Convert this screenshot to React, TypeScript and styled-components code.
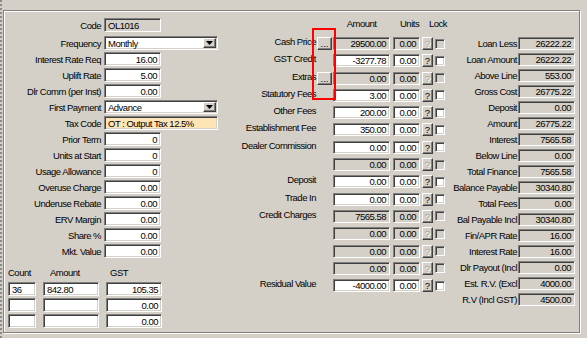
import React from 'react';
import styled, { createGlobalStyle } from 'styled-components';

const GlobalStyle = createGlobalStyle`
  html, body {
    margin: 0;
    padding: 0;
    background: #d4d0c8;
  }
  body {
    font-family: "Liberation Sans", Arial, sans-serif;
    font-size: 9.5px;
    letter-spacing: -0.5px;
    color: #000;
  }
`;

const Screen = styled.div`
  box-sizing: border-box;
  width: 587px;
  height: 338px;
  overflow: hidden;
  border-left: 2px dotted #8a8a8a;
  padding: 10px 0 0 1px;
`;

const Panel = styled.div`
  box-sizing: border-box;
  width: 577px;
  height: 323px;
  border: 1px solid #808080;
  box-shadow: inset 1px 1px #fff, 1px 1px #fff;
  display: flex;
  align-items: flex-start;
`;

// ---- shared win32-ish controls

const Field = styled.div<{ $w: number; $grey?: boolean; $left?: boolean; $bg?: string }>`
  box-sizing: border-box;
  flex: none;
  width: ${p => p.$w}px;
  height: 100%;
  border: 1px solid;
  border-color: #808080 #fff #fff #808080;
  box-shadow: inset 1px 1px #404040, inset -1px -1px #d4d0c8;
  background: ${p => p.$bg || (p.$grey ? '#d4d0c8' : '#fff')};
  padding: 0 3px;
  display: flex;
  align-items: center;
  justify-content: ${p => (p.$left ? 'flex-start' : 'flex-end')};
  white-space: nowrap;
  overflow: hidden;
`;

const SelectBox = styled(Field)`
  justify-content: space-between;
  padding: 0 1px 0 3px;
`;

const DropBtn = styled.div`
  box-sizing: border-box;
  width: 13px;
  height: 10px;
  background: #d4d0c8;
  border: 1px solid;
  border-color: #fff #404040 #404040 #fff;
  box-shadow: inset -1px -1px #808080;
  display: flex;
  align-items: center;
  justify-content: center;
`;

const RaisedBtn = styled.div<{ $w: number; $off?: boolean }>`
  box-sizing: border-box;
  flex: none;
  width: ${p => p.$w}px;
  height: 100%;
  background: #d4d0c8;
  border: 1px solid;
  border-color: #fff #404040 #404040 #fff;
  box-shadow: inset -1px -1px #808080;
  display: flex;
  align-items: center;
  justify-content: center;
  letter-spacing: 0;
  color: ${p => (p.$off ? '#a0a0a0' : '#000')};
  text-shadow: ${p => (p.$off ? '1px 1px #fff' : 'none')};
`;

const Check = styled.div<{ $off?: boolean }>`
  box-sizing: border-box;
  flex: none;
  width: 10px;
  height: 10px;
  margin-left: 2px;
  border: 1px solid;
  border-color: #808080 #fff #fff #808080;
  box-shadow: inset 1px 1px #404040, inset -1px -1px #d4d0c8;
  background: ${p => (p.$off ? '#d4d0c8' : '#fff')};
`;

// ---- left column

const LeftCol = styled.div`
  box-sizing: border-box;
  width: 216px;
  flex: none;
  padding-top: 7px;
`;

const LeftRows = styled.div`
  display: flex;
  flex-direction: column;
  gap: 2px;
`;

const LeftRow = styled.div<{ $extra?: number }>`
  display: flex;
  align-items: center;
  height: 14px;
  margin-bottom: ${p => p.$extra || 0}px;
`;

const LeftLabel = styled.div`
  width: 97px;
  margin-right: 3px;
  text-align: right;
  white-space: nowrap;
`;

const Totals = styled.div`
  display: grid;
  grid-template-columns: 28px 56px 56px;
  grid-auto-rows: 14px;
  column-gap: 7px;
  row-gap: 2px;
  margin: 8px 0 0 4px;
`;

const TotalsHead = styled.div<{ $pad?: number }>`
  height: 15px;
  line-height: 14px;
  padding-left: ${p => p.$pad || 0}px;
`;

// ---- middle column

const MidCol = styled.div`
  position: relative;
  box-sizing: border-box;
  width: 225px;
  flex: none;
  padding-top: 6px;
`;

const MidHead = styled.div`
  display: flex;
  height: 13px;
  align-items: center;
  margin-bottom: 7px;
`;

const HeadCell = styled.div<{ $w: number; $pad?: number; $center?: boolean }>`
  flex: none;
  width: ${p => p.$w}px;
  padding-left: ${p => p.$pad || 0}px;
  box-sizing: border-box;
  text-align: ${p => (p.$center ? 'center' : 'left')};
  white-space: nowrap;
`;

const MidRows = styled.div`
  display: flex;
  flex-direction: column;
  gap: 4.3px;
`;

const MidRow = styled.div`
  display: flex;
  align-items: center;
  height: 13px;
`;

const MidLabel = styled.div`
  box-sizing: border-box;
  width: 96px;
  padding-bottom: 4px;
  text-align: right;
  white-space: nowrap;
`;

const BtnSlot = styled.div`
  box-sizing: border-box;
  width: 17px;
  height: 100%;
  padding-left: 1px;
  flex: none;
`;

const Gap = styled.div<{ $w: number }>`
  flex: none;
  width: ${p => p.$w}px;
`;

const Highlight = styled.div`
  position: absolute;
  left: 92px;
  top: 17px;
  width: 24px;
  height: 72px;
  box-sizing: border-box;
  border: 2px solid #f00;
  pointer-events: none;
`;

// ---- right column

const RightCol = styled.div`
  box-sizing: border-box;
  width: 134px;
  flex: none;
  padding-top: 26px;
  display: flex;
  flex-direction: column;
  gap: 3px;
`;

const RightRow = styled.div`
  display: flex;
  align-items: center;
  height: 13px;
`;

const RightLabel = styled.div`
  width: 72px;
  margin-right: 1px;
  text-align: right;
  white-space: nowrap;
`;

const Arrow = () => (
  <svg width="7" height="4" viewBox="0 0 7 4">
    <polygon points="0,0 7,0 3.5,4" fill="#000" />
  </svg>
);

const Select = ({ value }: { value: string }) => (
  <SelectBox $w={114} $left>
    <span>{value}</span>
    <DropBtn>
      <Arrow />
    </DropBtn>
  </SelectBox>
);

const leftRows = [
  { label: 'Interest Rate Req', value: '16.00' },
  { label: 'Uplift Rate', value: '5.00' },
  { label: 'Dlr Comm (per Inst)', value: '0.00' },
];

const leftRows2 = [
  { label: 'Prior Term', value: '0' },
  { label: 'Units at Start', value: '0' },
  { label: 'Usage Allowance', value: '0' },
  { label: 'Overuse Charge', value: '0.00' },
  { label: 'Underuse Rebate', value: '0.00' },
  { label: 'ERV Margin', value: '0.00' },
  { label: 'Share %', value: '0.00' },
  { label: 'Mkt. Value', value: '0.00' },
];

const midRows = [
  { label: 'Cash Price', value: '29500.00', grey: true, more: true },
  { label: 'GST Credit', value: '-3277.78' },
  { label: 'Extras', value: '0.00', grey: true, more: true },
  { label: 'Statutory Fees', value: '3.00' },
  { label: 'Other Fees', value: '200.00' },
  { label: 'Establishment Fee', value: '350.00' },
  { label: 'Dealer Commission', value: '0.00' },
  { label: '', value: '0.00', grey: true },
  { label: 'Deposit', value: '0.00' },
  { label: 'Trade In', value: '0.00' },
  { label: 'Credit Charges', value: '7565.58', grey: true },
  { label: '', value: '0.00', grey: true },
  { label: '', value: '0.00', grey: true },
  { label: '', value: '0.00', grey: true },
  { label: 'Residual Value', value: '-4000.00' },
];

const rightRows = [
  ['Loan Less', '26222.22'],
  ['Loan Amount', '26222.22'],
  ['Above Line', '553.00'],
  ['Gross Cost', '26775.22'],
  ['Deposit', '0.00'],
  ['Amount', '26775.22'],
  ['Interest', '7565.58'],
  ['Below Line', '0.00'],
  ['Total Finance', '7565.58'],
  ['Balance Payable', '30340.80'],
  ['Total Fees', '0.00'],
  ['Bal Payable Incl', '30340.80'],
  ['Fin/APR Rate', '16.00'],
  ['Interest Rate', '16.00'],
  ['Dlr Payout (Incl', '0.00'],
  ['Est. R.V. (Excl', '4000.00'],
  ['R.V (Incl GST)', '4500.00'],
];

const totals = [
  ['36', '842.80', '105.35'],
  ['', '', '0.00'],
  ['', '', '0.00'],
];

const App = () => {
  return (
    <Screen>
      <GlobalStyle />
      <Panel>
        <LeftCol>
          <LeftRows>
            <LeftRow $extra={2}>
              <LeftLabel>Code</LeftLabel>
              <Field $w={57} $grey $left>OL1016</Field>
            </LeftRow>
            <LeftRow>
              <LeftLabel>Frequency</LeftLabel>
              <Select value="Monthly" />
            </LeftRow>
            {leftRows.map(r => (
              <LeftRow key={r.label}>
                <LeftLabel>{r.label}</LeftLabel>
                <Field $w={57}>{r.value}</Field>
              </LeftRow>
            ))}
            <LeftRow>
              <LeftLabel>First Payment</LeftLabel>
              <Select value="Advance" />
            </LeftRow>
            <LeftRow>
              <LeftLabel>Tax Code</LeftLabel>
              <Field $w={114} $left $bg="#ffe4b5">OT : Output Tax 12.5%</Field>
            </LeftRow>
            {leftRows2.map(r => (
              <LeftRow key={r.label}>
                <LeftLabel>{r.label}</LeftLabel>
                <Field $w={57}>{r.value}</Field>
              </LeftRow>
            ))}
          </LeftRows>

          <Totals>
            <TotalsHead>Count</TotalsHead>
            <TotalsHead $pad={7}>Amount</TotalsHead>
            <TotalsHead $pad={4}>GST</TotalsHead>
            {totals.map((t, i) => (
              <React.Fragment key={i}>
                <Field $w={28} $left>{t[0]}</Field>
                <Field $w={56} $left>{t[1]}</Field>
                <Field $w={56}>{t[2]}</Field>
              </React.Fragment>
            ))}
          </Totals>
        </LeftCol>

        <MidCol>
          <MidHead>
            <Gap $w={113} />
            <HeadCell $w={57} $center>Amount</HeadCell>
            <HeadCell $w={30} $pad={10}>Units</HeadCell>
            <HeadCell $w={25} $pad={9}>Lock</HeadCell>
          </MidHead>
          <MidRows>
            {midRows.map((r, i) => (
              <MidRow key={i}>
                <MidLabel>{r.label}</MidLabel>
                <BtnSlot>{r.more && <RaisedBtn $w={15}>...</RaisedBtn>}</BtnSlot>
                <Field $w={57} $grey={r.grey}>{r.value}</Field>
                <Gap $w={3} />
                <Field $w={27} $grey={r.grey}>0.00</Field>
                <Gap $w={2} />
                <RaisedBtn $w={11} $off={r.grey}>?</RaisedBtn>
                <Check $off={r.grey} />
              </MidRow>
            ))}
          </MidRows>
          <Highlight />
        </MidCol>

        <RightCol>
          {rightRows.map(([label, value]) => (
            <RightRow key={label}>
              <RightLabel>{label}</RightLabel>
              <Field $w={57} $grey>{value}</Field>
            </RightRow>
          ))}
        </RightCol>
      </Panel>
    </Screen>
  );
};

export default App;
